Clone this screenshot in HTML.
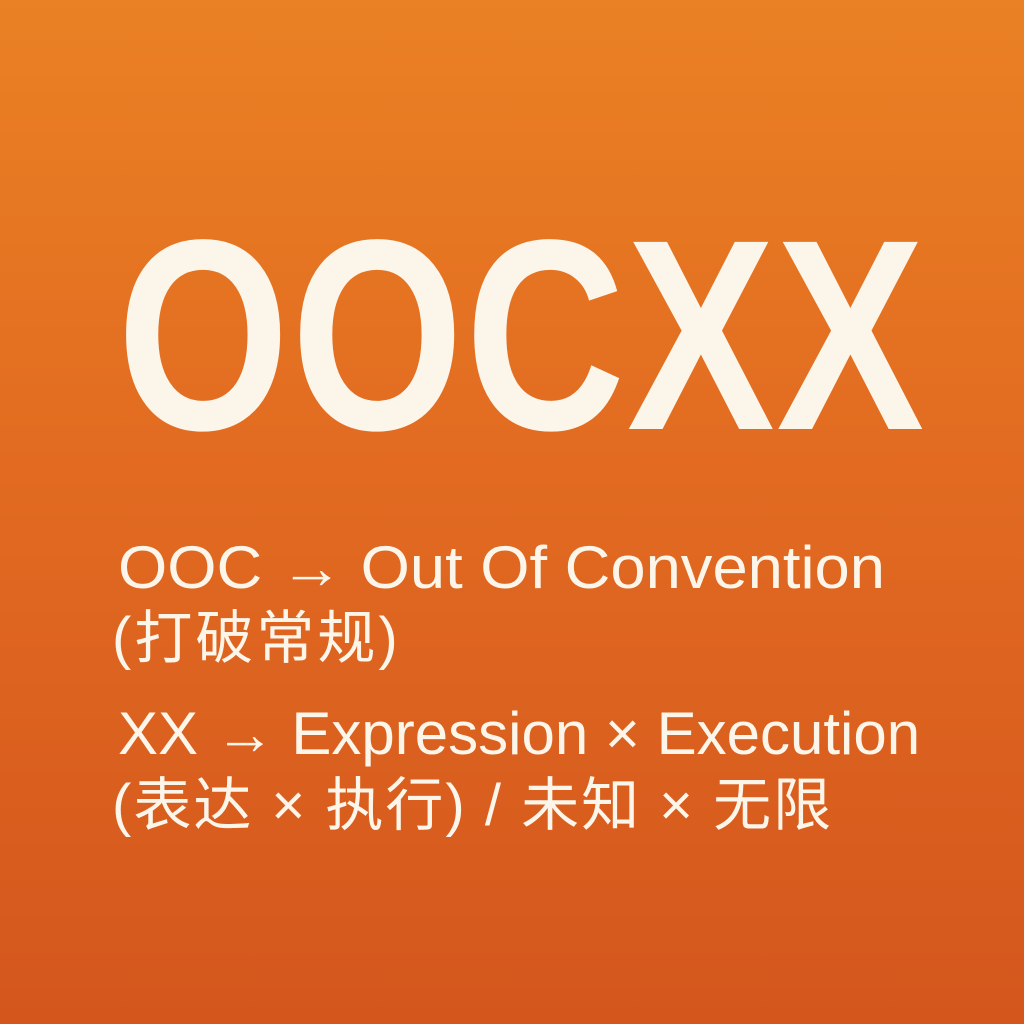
<!DOCTYPE html>
<html><head><meta charset="utf-8"><style>
html,body{margin:0;padding:0}
body{width:1024px;height:1024px;overflow:hidden;position:relative;
background:linear-gradient(180deg,#EA8124 0%,#E26B21 45%,#D4561D 100%);
font-family:"Liberation Sans","Noto Sans CJK SC",sans-serif;color:#FBF5EA}
.t{position:absolute;white-space:nowrap;transform-origin:0 0}
#big{left:117px;top:199px;font-size:272px;font-weight:bold;line-height:1;transform:scaleX(0.815);letter-spacing:2px}
.s{font-size:60px;line-height:1}
</style></head><body>
<div class="t" id="big">OOCXX</div>
<div class="t s" style="left:118px;top:538px;transform:scaleX(1.055)">OOC → Out Of Convention</div>
<div class="t s" style="left:112px;top:610px;font-size:58px;letter-spacing:3px">(打破常规)</div>
<div class="t s" style="left:118px;top:704px">XX → Expression × Execution</div>
<div class="t s" style="left:112px;top:777px;font-size:58px;letter-spacing:2px">(表达 × 执行) / 未知 × 无限</div>
</body></html>
